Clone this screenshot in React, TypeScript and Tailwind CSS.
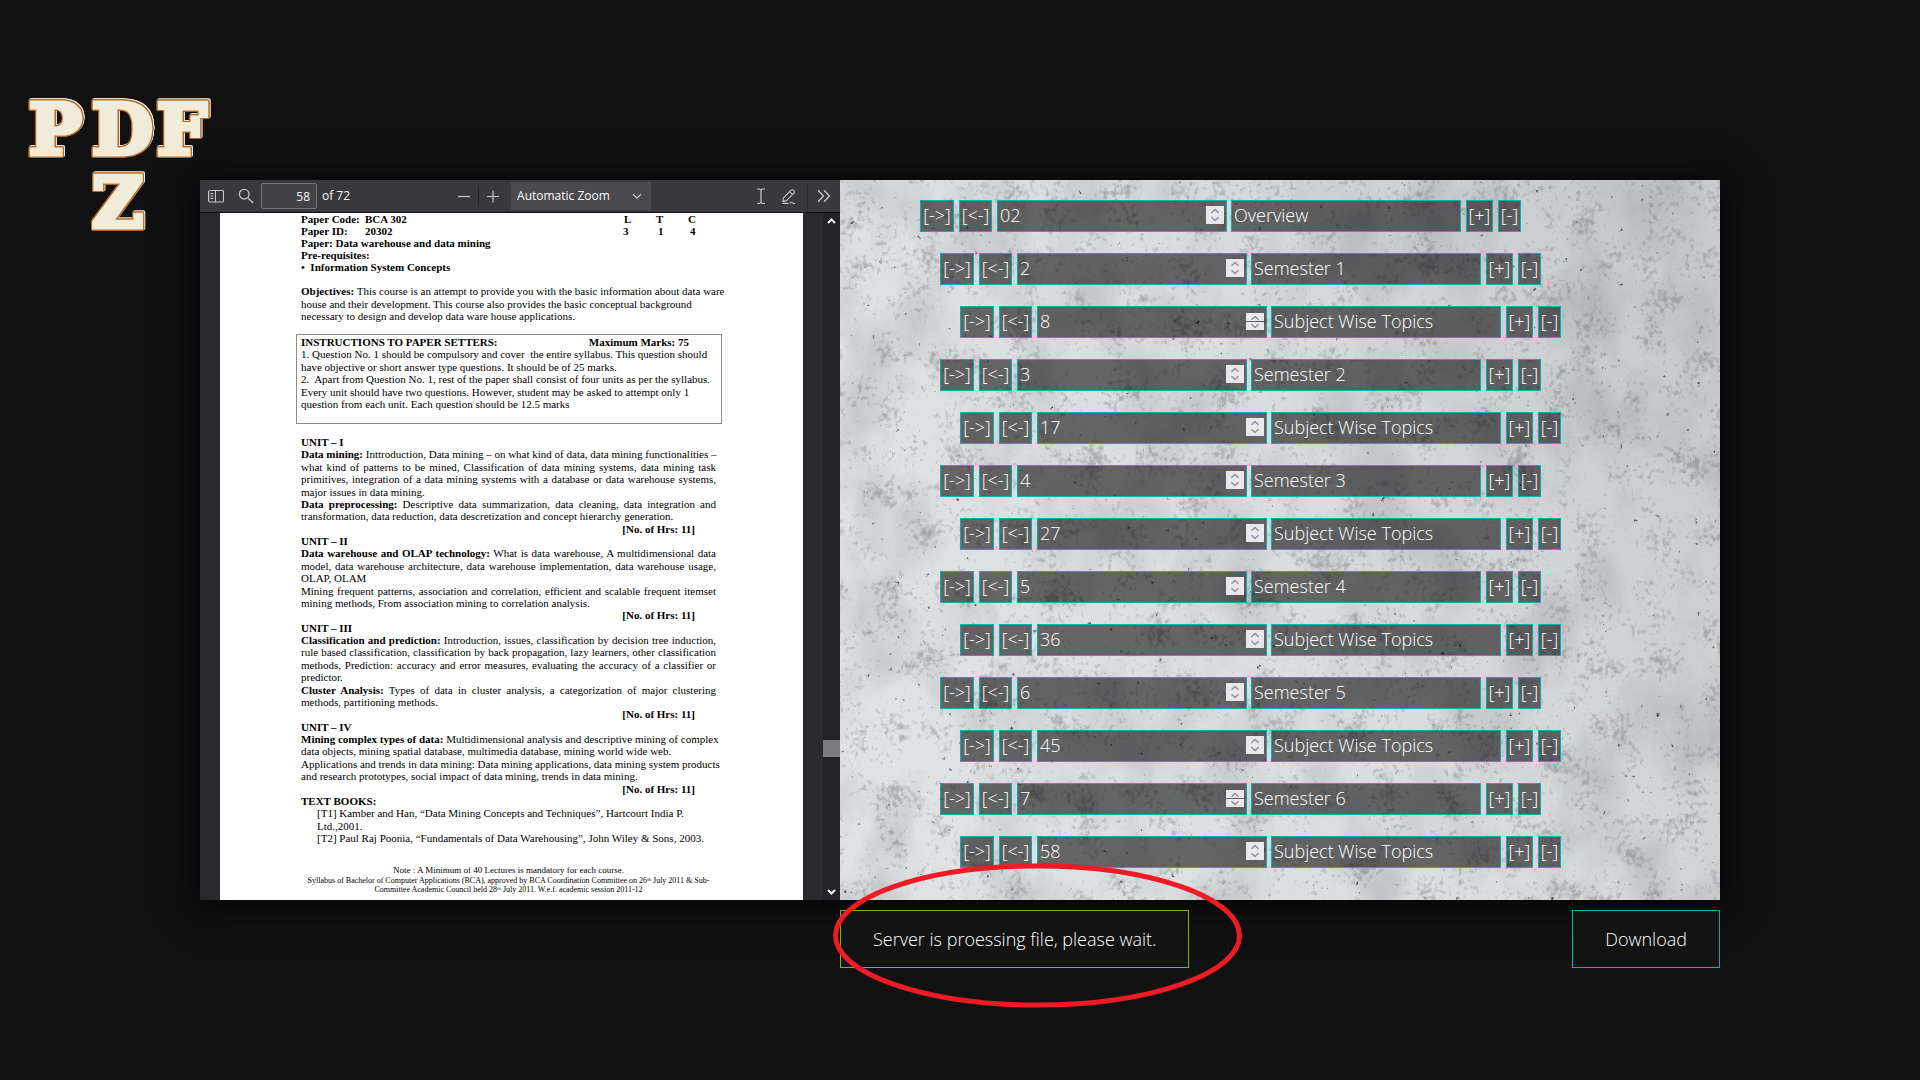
import type { ReactNode } from "react";

type Entry = { page: string; title: string; level: 0 | 1 | 2; split?: boolean };

const entries: Entry[] = [
  { page: "02", title: "Overview", level: 0 },
  { page: "2", title: "Semester 1", level: 1 },
  { page: "8", title: "Subject Wise Topics", level: 2, split: true },
  { page: "3", title: "Semester 2", level: 1 },
  { page: "17", title: "Subject Wise Topics", level: 2 },
  { page: "4", title: "Semester 3", level: 1 },
  { page: "27", title: "Subject Wise Topics", level: 2 },
  { page: "5", title: "Semester 4", level: 1 },
  { page: "36", title: "Subject Wise Topics", level: 2 },
  { page: "6", title: "Semester 5", level: 1 },
  { page: "45", title: "Subject Wise Topics", level: 2 },
  { page: "7", title: "Semester 6", level: 1, split: true },
  { page: "58", title: "Subject Wise Topics", level: 2 },
];

const indents = ["pl-0", "pl-5", "pl-10"];

function Logo() {
  const letters = [
    { c: "P", x: 29, y: 57 },
    { c: "D", x: 92, y: 57 },
    { c: "F", x: 157, y: 57 },
    { c: "Z", x: 92, y: 130 },
  ];
  return (
    <svg
      width="200"
      height="140"
      viewBox="0 0 200 140"
      className="block overflow-visible [filter:drop-shadow(1px_0_0_#b5651d)_drop-shadow(-1px_0_0_#b5651d)_drop-shadow(0_1px_0_#b5651d)_drop-shadow(0_-1px_0_#b5651d)_drop-shadow(1px_-1px_0_#efe9dc)]"
      role="img"
      aria-label="PDF Z"
      fill="#f1ebda"
      stroke="#f1ebda"
      strokeWidth="5"
      strokeLinejoin="miter"
      fontFamily="'DejaVu Serif', serif"
      fontWeight="700"
      fontSize="70"
    >
      {letters.map((t) => (
        <text key={t.c} x={t.x} y={t.y}>
          {t.c}
        </text>
      ))}
    </svg>
  );
}

function Line({ children, justify, indent, hours }: { children: ReactNode; justify?: boolean; indent?: boolean; hours?: boolean }) {
  return (
    <p
      className={
        "whitespace-nowrap " +
        (justify ? "[text-align-last:justify] " : "") +
        (indent ? "pl-4 " : "") +
        (hours ? "pr-[21px] text-right font-bold " : "")
      }
    >
      {children}
    </p>
  );
}

function Toolbar() {
  return (
    <div className="flex h-[33px] items-center border-b border-[#0c0c0d] bg-[#38383d] font-['Open_Sans',sans-serif] text-xs font-normal text-[#f9f9fa]">
      <button aria-label="Toggle Sidebar" className="ml-2 h-4 w-4">
        <svg viewBox="0 0 16 16" className="h-4 w-4" fill="none" stroke="#c8c8ca">
          <rect x="0.6" y="2.5" width="15" height="11.5" rx="1.5" strokeWidth="1.2" />
          <path d="M7.5 2.5v11.5M2.5 5.5h3M2.5 8h3M2.5 10.5h3" />
        </svg>
      </button>
      <button aria-label="Find in Document" className="ml-3.5 h-4 w-4">
        <svg viewBox="0 0 16 16" className="h-4 w-4" fill="none" stroke="#c0c0c2" strokeWidth="1.4" strokeLinecap="round">
          <circle cx="6.2" cy="6.2" r="4.8" />
          <path d="M9.8 9.8l4.8 4.8" />
        </svg>
      </button>
      <input
        aria-label="Page"
        defaultValue="58"
        className="ml-[7px] h-[26px] w-14 rounded-xs border border-[#76767a] bg-[#424247] pr-1.5 text-right outline-none"
      />
      <span className="mr-1 ml-[5px]">of 72</span>
      <button aria-label="Zoom Out" className="ml-auto h-4 w-4">
        <svg viewBox="0 0 16 16" className="h-4 w-4" stroke="#c8c8ca" strokeWidth="1.2">
          <path d="M2 8.5h12" />
        </svg>
      </button>
      <span className="mx-1.5 h-5 w-px bg-[#252528]" />
      <button aria-label="Zoom In" className="h-4 w-4">
        <svg viewBox="0 0 16 16" className="h-4 w-4" stroke="#c8c8ca" strokeWidth="1.2">
          <path d="M2 8.5h12M8 2.5v12" />
        </svg>
      </button>
      <div className="relative ml-2.5">
        <select aria-label="Zoom" className="h-7 w-[140px] appearance-none bg-[#4a4a4f] pl-1.5 outline-none">
          <option>Automatic Zoom</option>
        </select>
        <svg viewBox="0 0 16 16" className="pointer-events-none absolute top-1.5 right-1.5 h-4 w-4" fill="none" stroke="#d0d0d2" strokeWidth="1.2">
          <path d="M4 6.2l4 4 4-4" />
        </svg>
      </div>
      <button aria-label="Text" className="ml-auto h-4 w-4">
        <svg viewBox="0 0 16 16" className="h-4 w-4" fill="none" stroke="#c8c8ca" strokeWidth="1.2">
          <path d="M4 1h2.6L8 2.2 9.4 1H12M4 15.5h2.6L8 14.3l1.4 1.2H12M8 2.2v12" />
        </svg>
      </button>
      <button aria-label="Draw" className="ml-3 h-4 w-4">
        <svg viewBox="0 0 16 16" className="h-4 w-4" fill="none" stroke="#c8c8ca" strokeWidth="1.1" strokeLinejoin="round">
          <path d="M2.5 9.8L10 2.2a1.6 1.6 0 0 1 2.3 0l.7.7a1.6 1.6 0 0 1 0 2.3L5.5 12.6l-3.6.8zM8.6 3.6l3 3M1.5 15.4h6M9 15.4c1-1.5 1.8-1.5 2.4-.6s1.4.6 2.6.6" />
        </svg>
      </button>
      <span className="ml-2.5 h-6 w-px bg-[#252528]" />
      <button aria-label="Tools" className="mr-2 ml-2 h-4 w-4">
        <svg viewBox="0 0 16 16" className="h-4 w-4" fill="none" stroke="#c8c8ca" strokeWidth="1.4">
          <path d="M2 2.2l5.5 5.8L2 13.8M8 2.2l5.5 5.8L8 13.8" />
        </svg>
      </button>
    </div>
  );
}

function PdfPage() {
  return (
    <article className="min-w-0 flex-1 bg-white pr-[87px] pl-[81px] font-['Liberation_Serif',serif] text-[11px] leading-3 font-normal text-black">
      <div className="font-bold">
        <div className="flex">
          <span className="w-16">Paper Code:</span>
          <span>BCA 302</span>
          <span className="ml-auto w-8">L</span>
          <span className="w-8">T</span>
          <span className="mr-4 w-3">C</span>
        </div>
        <div className="flex">
          <span className="w-16">Paper ID:</span>
          <span>20302</span>
          <span className="ml-auto w-[35px]">3</span>
          <span className="w-8">1</span>
          <span className="mr-4 w-2.5">4</span>
        </div>
        <p>Paper: Data warehouse and data mining</p>
        <p>Pre-requisites:</p>
        <p>•&nbsp; Information System Concepts</p>
      </div>

      <div className="mt-3 flex h-[37px] flex-col justify-between">
        <Line><b>Objectives:</b> This course is an attempt to provide you with the basic information about data ware</Line>
        <Line>house and their development. This course also provides the basic conceptual background</Line>
        <Line>necessary to design and develop data ware house applications.</Line>
      </div>

      <div className="mt-3 -mr-1.5 -ml-[5px] border border-[#8c8c8c] px-1 pt-px pb-[13px]">
        <div className="flex h-[74px] flex-col justify-between">
          <p className="flex justify-between pr-7 font-bold">
            <span>INSTRUCTIONS TO PAPER SETTERS:</span>
            <span>Maximum Marks: 75</span>
          </p>
          <Line>1. Question No. 1 should be compulsory and cover&nbsp; the entire syllabus. This question should</Line>
          <Line>have objective or short answer type questions. It should be of 25 marks.</Line>
          <Line>2.&nbsp; Apart from Question No. 1, rest of the paper shall consist of four units as per the syllabus.</Line>
          <Line>Every unit should have two questions. However, student may be asked to attempt only 1</Line>
          <Line>question from each unit. Each question should be 12.5 marks</Line>
        </div>
      </div>

      <div className="mt-3 flex h-[408px] flex-col justify-between">
        <Line><b>UNIT – I</b></Line>
        <Line justify><b>Data mining:</b> Inttroduction, Data mining – on what kind of data, data mining functionalities –</Line>
        <Line justify>what kind of patterns to be mined, Classification of data mining systems, data mining task</Line>
        <Line justify>primitives, integration of a data mining systems with a database or data warehouse systems,</Line>
        <Line>major issues in data mining.</Line>
        <Line justify><b>Data preprocessing:</b> Descriptive data summarization, data cleaning, data integration and</Line>
        <Line>transformation, data reduction, data descretization and concept hierarchy generation.</Line>
        <Line hours>[No. of Hrs: 11]</Line>
        <Line><b>UNIT – II</b></Line>
        <Line justify><b>Data warehouse and OLAP technology:</b> What is data warehouse, A multidimensional data</Line>
        <Line justify>model, data warehouse architecture, data warehouse implementation, data warehouse usage,</Line>
        <Line>OLAP, OLAM</Line>
        <Line justify>Mining frequent patterns, association and correlation, efficient and scalable frequent itemset</Line>
        <Line>mining methods, From association mining to correlation analysis.</Line>
        <Line hours>[No. of Hrs: 11]</Line>
        <Line><b>UNIT – III</b></Line>
        <Line justify><b>Classification and prediction:</b> Introduction, issues, classification by decision tree induction,</Line>
        <Line justify>rule based classification, classification by back propagation, lazy learners, other classification</Line>
        <Line justify>methods, Prediction: accuracy and error measures, evaluating the accuracy of a classifier or</Line>
        <Line>predictor.</Line>
        <Line justify><b>Cluster Analysis:</b> Types of data in cluster analysis, a categorization of major clustering</Line>
        <Line>methods, partitioning methods.</Line>
        <Line hours>[No. of Hrs: 11]</Line>
        <Line><b>UNIT – IV</b></Line>
        <Line justify><b>Mining complex types of data:</b> Multidimensional analysis and descriptive mining of complex</Line>
        <Line>data objects, mining spatial database, multimedia database, mining world wide web.</Line>
        <Line justify>Applications and trends in data mining: Data mining applications, data mining system products</Line>
        <Line>and research prototypes, social impact of data mining, trends in data mining.</Line>
        <Line hours>[No. of Hrs: 11]</Line>
        <Line><b>TEXT BOOKS:</b></Line>
        <Line indent>[T1] Kamber and Han, “Data Mining Concepts and Techniques”, Hartcourt India P.</Line>
        <Line indent>Ltd.,2001.</Line>
        <Line indent>[T2] Paul Raj Poonia, “Fundamentals of Data Warehousing”, John Wiley &amp; Sons, 2003.</Line>
      </div>

      <div className="mt-5 text-center whitespace-nowrap">
        <p className="text-[9px] leading-3">Note : A Minimum of 40 Lectures is mandatory for each course.</p>
        <p className="text-[8px] leading-[9px]">
          Syllabus of Bachelor of Computer Applications (BCA), approved by BCA Coordination Committee on 26
          <sup className="text-[5px]">th</sup> July 2011 &amp; Sub-
          <br />
          Committee Academic Council held 28<sup className="text-[5px]">th</sup> July 2011. W.e.f. academic session 2011-12
        </p>
      </div>
    </article>
  );
}

function Viewer() {
  return (
    <section className="flex min-w-0 flex-col bg-[#2a2a2e]">
      <Toolbar />
      <div className="flex flex-1 overflow-hidden pl-5">
        <PdfPage />
        <div className="ml-5 flex w-[17px] flex-col items-center bg-[#232327]">
          <svg viewBox="0 0 17 17" className="h-[17px] w-[17px]" fill="none" stroke="#f2f2f2" strokeWidth="2">
            <path d="M5 10l3.5-3.5L12 10" />
          </svg>
          <div className="w-full grow-[510]" />
          <div className="h-[17px] w-full bg-[#7b7b7d]" />
          <div className="w-full grow-[126]" />
          <svg viewBox="0 0 17 17" className="h-[17px] w-[17px]" fill="none" stroke="#f2f2f2" strokeWidth="2">
            <path d="M5 7l3.5 3.5L12 7" />
          </svg>
        </div>
      </div>
    </section>
  );
}

function Concrete() {
  return (
    <svg className="absolute inset-0 h-full w-full" aria-hidden="true">
      <defs>
        <linearGradient id="tone" x1="0" y1="0.7" x2="1" y2="0.3">
          <stop offset="0" stopColor="#e1e2e4" />
          <stop offset="0.55" stopColor="#dbdcde" />
          <stop offset="1" stopColor="#c9cacd" />
        </linearGradient>
        <filter id="clouds" x="0" y="0" width="100%" height="100%" colorInterpolationFilters="sRGB">
          <feTurbulence type="fractalNoise" baseFrequency="0.014 0.01" numOctaves="8" seed="7" />
          <feColorMatrix values="0 0 0 0 0.5  0 0 0 0 0.51  0 0 0 0 0.53  2 0 0 0 -0.85" />
        </filter>
        <filter id="grain" x="0" y="0" width="100%" height="100%" colorInterpolationFilters="sRGB">
          <feTurbulence type="fractalNoise" baseFrequency="0.03 0.03" numOctaves="7" seed="23" result="patch" />
          <feTurbulence type="fractalNoise" baseFrequency="0.22 0.18" numOctaves="3" seed="5" result="fine" />
          <feComposite in="patch" in2="fine" operator="arithmetic" k1="0" k2="0.5" k3="0.5" k4="0" />
          <feColorMatrix values="0 0 0 0 0.35  0 0 0 0 0.36  0 0 0 0 0.38  5 0 0 0 -2.75" />
        </filter>
        <filter id="pits" x="0" y="0" width="100%" height="100%" colorInterpolationFilters="sRGB">
          <feTurbulence type="fractalNoise" baseFrequency="0.13 0.13" numOctaves="4" seed="41" />
          <feColorMatrix values="0 0 0 0 0.15  0 0 0 0 0.15  0 0 0 0 0.16  9 0 0 0 -7.2" />
        </filter>
      </defs>
      <rect width="100%" height="100%" fill="url(#tone)" />
      <rect width="100%" height="100%" filter="url(#clouds)" opacity="0.35" />
      <rect width="100%" height="100%" filter="url(#grain)" opacity="0.35" />
      <rect width="100%" height="100%" filter="url(#pits)" opacity="0.75" />
    </svg>
  );
}

const box = "h-8 border border-[#00b2b3] bg-black/55 pb-0.5 text-white outline-none";

function Row({ entry }: { entry: Entry }) {
  return (
    <li className={"flex gap-[5px] " + indents[entry.level]}>
      <button className={box + " w-[34px]"}>[-&gt;]</button>
      <button className={box + " w-[33px]"}>[&lt;-]</button>
      <div className="relative -mr-px">
        <input
          type="number"
          aria-label="Page number"
          defaultValue={entry.page}
          className={box + " block w-[230px] [appearance:textfield] px-0.5 [&::-webkit-inner-spin-button]:appearance-none"}
        />
        <div
          className={
            "absolute top-1.5 right-[3px] flex w-[18px] flex-col overflow-hidden " + (entry.split ? "gap-px pt-px" : "")
          }
        >
          <button aria-label="Increase" className={"w-full bg-[#e9e9ed] " + (entry.split ? "h-2" : "h-[9px]")}>
            <svg viewBox="0 0 18 9" className="block w-full" fill="none" stroke="#8f8f9d" strokeWidth="1.5">
              <path d="M5.5 6.7L9 3.5l3.5 3.2" />
            </svg>
          </button>
          <button aria-label="Decrease" className={"w-full bg-[#e9e9ed] " + (entry.split ? "h-2" : "h-[9px]")}>
            <svg viewBox="0 0 18 9" className="block w-full" fill="none" stroke="#8f8f9d" strokeWidth="1.5">
              <path d="M5.5 2.3L9 5.5l3.5-3.2" />
            </svg>
          </button>
        </div>
      </div>
      <input aria-label="Title" defaultValue={entry.title} className={box + " w-[230px] px-0.5"} />
      <button className={box + " w-[27px]"}>[+]</button>
      <button className={box + " w-[23px]"}>[-]</button>
    </li>
  );
}

export default function App() {
  return (
    <div className="flex min-h-screen items-start bg-[#111111] font-['Open_Sans',sans-serif] text-lg font-light text-white">
      <header className="w-[200px] shrink-0 pt-[97px]">
        <Logo />
      </header>
      <main className="min-w-0 flex-1 pt-[180px] pr-[200px]">
        <div className="grid grid-cols-[8fr_11fr] shadow-[0_4px_30px_8px_rgba(0,0,0,0.65)]">
          <Viewer />
          <section className="relative min-w-0">
            <Concrete />
            <ul className="relative flex flex-col gap-[21px] pt-5 pb-8 pl-20">
              {entries.map((e, i) => (
                <Row key={i} entry={e} />
              ))}
            </ul>
          </section>
        </div>
        <div className="grid grid-cols-[8fr_11fr] pt-2.5">
          <div className="col-start-2 flex items-start justify-between">
            <div className="relative">
              <p role="status" className="border border-[#7ab800] bg-[#131313] px-8 py-[15px] leading-[26px]">
                Server is proessing file, please wait.
              </p>
              <svg className="pointer-events-none absolute -top-12 -left-2 h-[146px] w-[412px]" viewBox="0 0 412 146" fill="none" aria-hidden="true">
                <ellipse cx="205.5" cy="73.5" rx="202" ry="69.5" stroke="#ed1c24" strokeWidth="5" />
              </svg>
            </div>
            <button className="border border-[#00b2b3] bg-[#131313] px-8 py-[15px] leading-[26px]">Download</button>
          </div>
        </div>
      </main>
    </div>
  );
}
